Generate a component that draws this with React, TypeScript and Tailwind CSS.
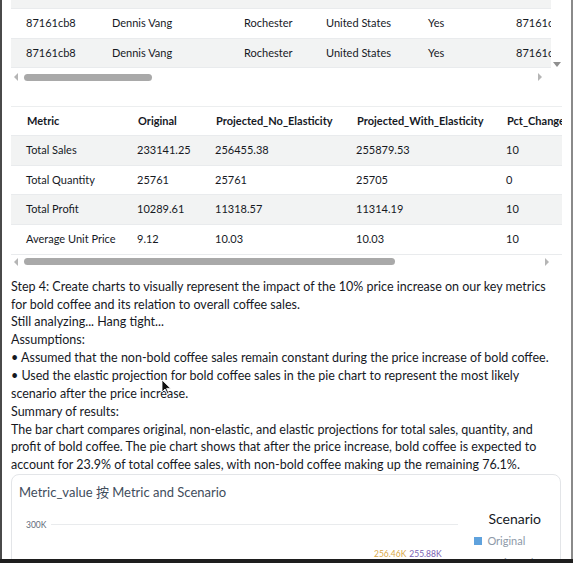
import React from 'react';

const rows1 = [
  ['87161cb8', 'Dennis Vang', 'Rochester', 'United States', 'Yes', '87161cb8'],
  ['87161cb8', 'Dennis Vang', 'Rochester', 'United States', 'Yes', '87161cb8'],
];
const widths1 = ['w-[86px]', 'w-[132px]', 'w-[82px]', 'w-[102px]', 'w-[88px]', 'w-[50px]'];

const header2 = ['Metric', 'Original', 'Projected_No_Elasticity', 'Projected_With_Elasticity', 'Pct_Change_Sales'];
const rows2 = [
  ['Total Sales', '233141.25', '256455.38', '255879.53', '10'],
  ['Total Quantity', '25761', '25761', '25705', '0'],
  ['Total Profit', '10289.61', '11318.57', '11314.19', '10'],
  ['Average Unit Price', '9.12', '10.03', '10.03', '10'],
];
const widths2 = ['w-[111px]', 'w-[78px]', 'w-[141px]', 'w-[150px]', 'w-[71px]'];

const HScroll: React.FC<{ thumb: string; right: string; h: string }> = ({ thumb, right, h }) => (
  <div className={`flex items-center ${h}`}>
    <span className="ml-[3px] w-0 h-0 border-y-[4px] border-y-transparent border-r-[4px] border-r-[#b5b5b5]" />
    <div className={`ml-[6px] h-[7px] rounded-full bg-[#a9a9a9] ${thumb}`} />
    <span className={`w-0 h-0 border-y-[4px] border-y-transparent border-l-[4px] border-l-[#b5b5b5] ${right}`} />
  </div>
);

const App: React.FC = () => {
  return (
    <div className="w-[573px] h-[563px] overflow-hidden bg-white flex flex-col relative font-['Lato',sans-serif] text-[#16191f]">
      <div className="flex-1 min-h-0 overflow-hidden border-l-2 border-l-[#4a4a4a] border-r-2 border-r-[#8a8a8a] pl-[9px]">
        {/* first table, scrolled to the bottom */}
        <div className="flex">
          <div className="w-[540px] overflow-hidden">
            <div className="h-[9px] bg-[#f2f3f3] border-b border-[#e9ebed]" />
            {rows1.map((r, i) => (
              <div
                key={i}
                className={`flex h-[29.5px] items-center border-b border-[#e9ebed] whitespace-nowrap text-[11px] ${i % 2 === 1 ? 'bg-[#f2f3f3]' : 'bg-white'}`}
              >
                {r.map((c, j) => (
                  <div key={j} className={`${widths1[j]} shrink-0 pl-[15px]`}>{c}</div>
                ))}
              </div>
            ))}
          </div>
          <div className="w-[12px] flex flex-col justify-end items-center pb-[1px]">
            <span className="w-0 h-0 border-x-[4px] border-x-transparent border-t-[5px] border-t-[#8f8f8f]" />
          </div>
        </div>
        <HScroll h="h-[18px]" thumb="w-[128px]" right="ml-[386px]" />

        {/* second table */}
        <div className="mt-[20px] w-[551px] overflow-hidden border-t border-[#eceeef]">
          <div className="flex h-[29px] items-center border-b border-[#e9ebed] whitespace-nowrap text-[11px] font-bold">
            {header2.map((c, j) => (
              <div key={j} className={`${widths2[j]} shrink-0 pl-[16px] overflow-hidden`}>{c}</div>
            ))}
          </div>
          {rows2.map((r, i) => (
            <div
              key={i}
              className={`flex h-[29.7px] items-center border-b border-[#e9ebed] whitespace-nowrap text-[11px] ${i % 2 === 0 ? 'bg-[#f2f3f3]' : 'bg-white'}`}
            >
              {r.map((c, j) => (
                <div key={j} className={`${widths2[j]} shrink-0 pl-[15px]`}>{c}</div>
              ))}
            </div>
          ))}
        </div>
        <HScroll h="h-[14px]" thumb="w-[371px]" right="ml-[150px]" />

        {/* analysis text */}
        <div className="mt-[9px] whitespace-nowrap text-[12.5px] leading-[17.85px]">
          <p>Step 4: Create charts to visually represent the impact of the 10% price increase on our key metrics<br />for bold coffee and its relation to overall coffee sales.</p>
          <p>Still analyzing... Hang tight...</p>
          <p>Assumptions:</p>
          <p>• Assumed that the non-bold coffee sales remain constant during the price increase of bold coffee.</p>
          <p>• Used the elastic projection for bold coffee sales in the pie chart to represent the most likely<br />scenario after the price increase.</p>
          <p>Summary of results:</p>
          <p>The bar chart compares original, non-elastic, and elastic projections for total sales, quantity, and<br />profit of bold coffee. The pie chart shows that after the price increase, bold coffee is expected to<br />account for 23.9% of total coffee sales, with non-bold coffee making up the remaining 76.1%.</p>
        </div>

        {/* chart card */}
        <div className="w-[550px] h-[120px] border border-[#e3e5e8] rounded-[8px] px-[7px] pt-[8px]">
          <div className="text-[13px] text-[#414d5c] font-['Lato','Noto_Sans_CJK_SC',sans-serif]">Metric_value 按 Metric and Scenario</div>
          <div className="flex mt-[6px]">
            <div className="w-[450px]">
              <div className="flex items-center mt-[10px]">
                <span className="w-[32px] pl-[7px] text-[8.5px] text-[#5f6b7a]">300K</span>
                <div className="w-[407px] h-px bg-[#e9ebed]" />
              </div>
              <div className="flex gap-[3px] ml-[355px] mt-[17px] text-[8.5px]">
                <span className="text-[#d9a94a]">256.46K</span>
                <span className="text-[#7a62b3]">255.88K</span>
              </div>
            </div>
            <div className="ml-[13px]">
              <div className="ml-[14px] text-[14px] leading-[19px] text-[#16191f]">Scenario</div>
              <div className="flex items-center gap-[5px] mt-[5px]">
                <span className="w-[8px] h-[8px] bg-[#5fa2dd]" />
                <span className="text-[11px] text-[#8d99a8]">Original</span>
              </div>
              <div className="flex items-center gap-[5px] mt-[6px]">
                <span className="w-[8px] h-[8px] bg-[#e0b166]" />
                <span className="text-[11px] text-[#8d99a8]">Projected_No</span>
              </div>
            </div>
          </div>
        </div>
      </div>
      <div className="h-[4px] bg-[#1e1e1e] shrink-0" />

      {/* mouse pointer */}
      <svg className="absolute left-[161px] top-[379px]" width="11" height="16" viewBox="0 0 11 16">
        <path d="M1 1 L1 13 L4 10 L6.5 15 L8 14.3 L5.6 9.4 L9.6 9.4 Z" fill="#111" stroke="#fff" strokeWidth="0.8" />
      </svg>
    </div>
  );
};

export default App;
